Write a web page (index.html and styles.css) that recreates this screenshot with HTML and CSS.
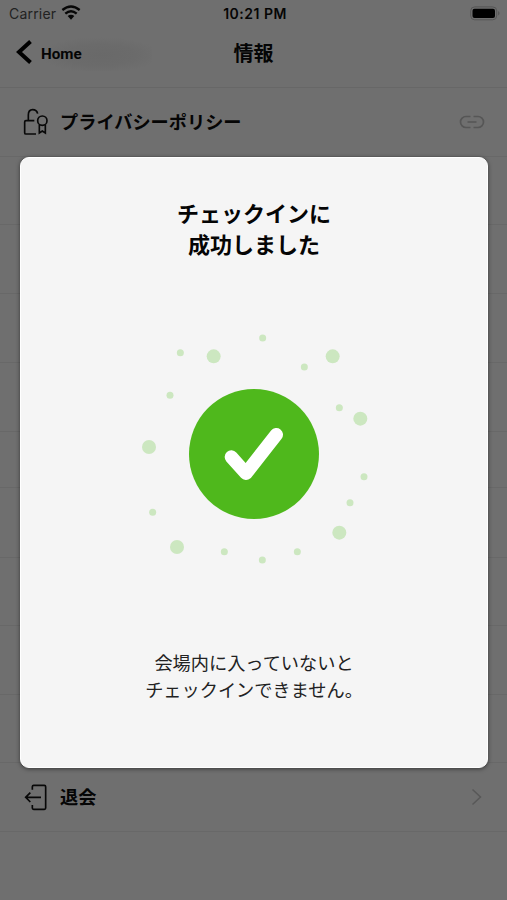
FILE: index.html
```html
<!DOCTYPE html>
<html lang="ja">
<head>
<meta charset="utf-8">
<title>情報</title>
<link rel="stylesheet" href="styles.css">
</head>
<body>
<main class="screen">
  <header class="top">
    <div class="status">
      <div class="carrier"><span>Carrier</span>
        <svg width="20" height="15" viewBox="0 0 60 45"><g fill="none" stroke="#070707" stroke-width="7"><path d="M4 15Q30-6 56 15"/><path d="M13 26Q30 11 47 26"/></g><path d="M20 33Q30 25 40 33L30 44Z" fill="#070707"/></svg>
      </div>
      <span class="time">10:21 PM</span>
      <svg class="battery" width="31" height="15" viewBox="0 0 31 15"><rect x=".7" y=".9" width="26" height="12.9" rx="4" fill="none" stroke="#555"/><rect x="2.5" y="2.7" width="22.5" height="9.3" rx="2" fill="#000"/><path d="M28.4 5q2 2.2 0 4.6z" fill="#4b4b4b"/></svg>
    </div>
    <div class="nav">
      <div class="back">
        <svg width="18" height="26" viewBox="0 0 18 26"><path d="M15.500 2.500 4 13 15.500 23.500" fill="none" stroke="#000" stroke-width="4"/></svg>
        <span>Home</span>
      </div>
      <h1>情報</h1>
    </div>
  </header>
  <ul class="list">
    <li class="row r69">
      <svg class="icon" width="26" height="28" viewBox="0 0 78 84"><g fill="none" stroke="#080808" stroke-width="5"><path d="M39 78H9q-4 0-4-4V42q0-4 4-4H34M16 38V21Q16 5 29 5 41 5 44 17"/><circle cx="58" cy="38" r="14"/><path d="M49 50V75L58 69 67 75V50"/></g></svg>
      <span class="label">プライバシーポリシー</span>
      <svg class="link" width="26" height="14" viewBox="0 0 26 14"><path d="M11.500 1.500H7a5.500 5.500 0 0 0 0 11h4.500M14.500 1.500H19a5.500 5.500 0 0 1 0 11h-4.500M8.500 7h9" fill="none" stroke="#565656" stroke-width="1.700"/></svg>
    </li>
    <li class="row r68"></li>
    <li class="row r69"></li>
    <li class="row r69"></li>
    <li class="row r69"></li>
    <li class="row r56"></li>
    <li class="row r70"></li>
    <li class="row r68"></li>
    <li class="row r69"></li>
    <li class="row r68"></li>
    <li class="row r69">
      <svg class="icon" width="26" height="28" viewBox="0 0 78 84"><path d="M28 20V11q0-4 4-4H64q4 0 4 4V75q0 4-4 4H32q-4 0-4-4V66M54 43H8M22 29 8 43 22 57" fill="none" stroke="#080808" stroke-width="5"/></svg>
      <span class="label">退会</span>
      <svg class="chevron" width="12" height="18" viewBox="0 0 12 18"><path d="m1.500 1.500 8 7.500-8 7.500" fill="none" stroke="#585858" stroke-width="1.500"/></svg>
    </li>
  </ul>
</main>
<section class="modal" role="dialog">
  <h2>チェックインに<br>成功しました</h2>
  <svg class="success" width="250" height="260" viewBox="0 0 750 780">
    <g fill="#cce7c0">
      <circle cx="251" cy="109" r="21"/><circle cx="608" cy="109" r="21"/><circle cx="691" cy="296" r="21"/><circle cx="57" cy="381" r="21"/><circle cx="628" cy="638" r="21"/><circle cx="141" cy="681" r="21"/>
      <circle cx="398" cy="54" r="10.500"/><circle cx="151" cy="98" r="10.500"/><circle cx="523" cy="141" r="10.500"/><circle cx="120" cy="226" r="10.500"/><circle cx="628" cy="263" r="10.500"/><circle cx="702" cy="470" r="10.500"/><circle cx="660" cy="548" r="10.500"/><circle cx="68" cy="577" r="10.500"/><circle cx="283" cy="695" r="10.500"/><circle cx="502" cy="695" r="10.500"/><circle cx="397" cy="720" r="10.500"/>
    </g>
    <circle cx="372" cy="402" r="195" fill="#4fb81c"/>
    <path d="M304 411 348 460 439 344" fill="none" stroke="#fff" stroke-width="40" stroke-linecap="round" stroke-linejoin="round"/>
  </svg>
  <p>会場内に入っていないと<br>チェックインできません。</p>
</section>
</body>
</html>
```
FILE: styles.css
```css
* { box-sizing: border-box; }
body {
  margin: 0;
  height: 900px;
  overflow: hidden;
  background: #6f6f6f;
  color: #050505;
  font-family: Inter, "Noto Sans CJK JP", sans-serif;
}
svg { display: block; flex: none; }
h1, h2, p, ul { margin: 0; padding: 0; }
.top { height: 88px; border-bottom: 1px solid #676767; }
.status {
  display: grid;
  grid-template-columns: 1fr auto 1fr;
  align-items: center;
  height: 27px;
  padding: 0 6px 0 9px;
  font-size: 14px;
}
.carrier { display: flex; align-items: center; gap: 5px; color: #222; letter-spacing: .2px; }
.carrier svg { margin-top: -2px; }
.time { font-weight: 600; font-size: 14px; letter-spacing: .5px; }
.battery { justify-self: end; }
.nav {
  display: grid;
  grid-template-columns: 1fr auto 1fr;
  align-items: center;
  height: 53px;
}
.back {
  display: flex;
  align-items: center;
  gap: 8px;
  width: 152px;
  height: 34px;
  padding-left: 15px;
  font: 700 15.200px Roboto, sans-serif;
  background: radial-gradient(ellipse 60px 18px at 100px 18px, #696969 0%, #6b6b6b 60%, transparent 100%);
}
.back svg { margin-top: -4px; }
h1 { padding-top: 1px; font-size: 20px; line-height: 30px; }
.list { list-style: none; }
.row {
  display: flex;
  align-items: center;
  padding: 0 22px 0 23px;
  border-bottom: 1px solid #686868;
}
.r56 { height: 56px; }
.r68 { height: 68px; }
.r69 { height: 69px; }
.r70 { height: 70px; }
.label { flex: 1; margin-left: 11px; padding-top: 1px; font-size: 18.200px; font-weight: 700; line-height: 27px; }
.chevron { margin-right: 2px; }
.modal {
  position: absolute;
  left: 20px;
  top: 157px;
  width: 468px;
  height: 611px;
  display: flex;
  flex-direction: column;
  align-items: center;
  padding-top: 41px;
  border: 1px solid #fff;
  border-radius: 9px;
  background: #f5f5f5;
  box-shadow: 0 1px 4px rgba(0, 0, 0, .5);
  text-align: center;
}
h2 { font-size: 22px; line-height: 31px; }
.success { margin: 59px 0 0 2px; }
.modal p { margin-top: 70px; color: #222; font-size: 18.200px; line-height: 27px; }
```
